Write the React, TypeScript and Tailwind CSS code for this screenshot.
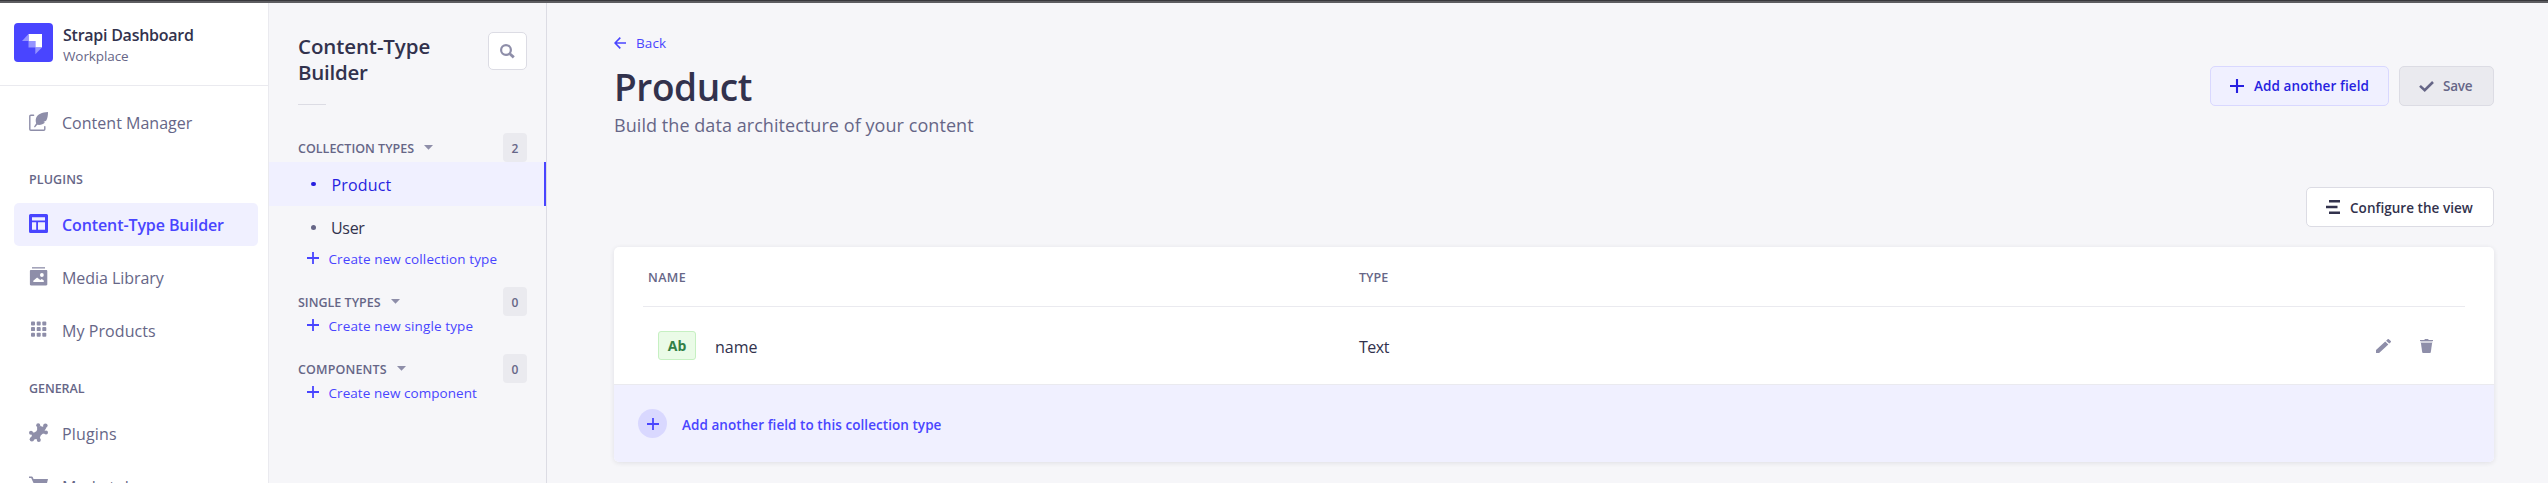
import type { ReactNode } from "react";

const FeatherIcon = () => (
  <svg width="19" height="19" viewBox="0 0 19 19" fill="none">
    <path d="M4.600 3.200H1.800a1 1 0 0 0-1 1V17.200a1 1 0 0 0 1 1H14.800a1 1 0 0 0 1-1V14.600" stroke="#8e8ea9" strokeWidth="1.400" strokeLinecap="round" />
    <path d="M19 0C13 .2 8.400 2.400 7.100 6c-.7 2-.3 4 .1 5.300L5 14.700l.9.7 2.300-2.600c2.800.4 6-.1 7.800-2.300l-1.600-.4 2.700-1.300C18.600 6.500 19 3.200 19 0Z" fill="#8e8ea9" />
  </svg>
);

const LayoutIcon = () => (
  <svg width="19" height="19" viewBox="0 0 19 19">
    <path fillRule="evenodd" fill="#4945ff" d="M1.500 0h16A1.500 1.500 0 0 1 19 1.500v16a1.500 1.500 0 0 1-1.500 1.500h-16A1.500 1.500 0 0 1 0 17.500v-16A1.500 1.500 0 0 1 1.500 0ZM3 3.200v3.300h13V3.200H3Zm0 5.100v7.400h4.200V8.300H3Zm6 0v7.400h7V8.300H9Z" />
  </svg>
);

const MediaIcon = () => (
  <svg width="19" height="19" viewBox="0 0 19 19">
    <path fill="#8e8ea9" d="M3 .2h13v1.300H3z" />
    <path fillRule="evenodd" fill="#8e8ea9" d="M2 2.900h15.200c.7 0 1.100.4 1.100 1.100v13.300c0 .7-.4 1.100-1.100 1.100H2c-.7 0-1.100-.4-1.100-1.100V4c0-.7.4-1.100 1.100-1.100ZM12.900 6.100a1.900 1.900 0 1 0 0 3.800 1.900 1.900 0 0 0 0-3.800ZM4.300 14.900h10.500v-1.400l-2-1.400-1.500 1-3.200-2.500-3.800 3.200v1.100Z" />
  </svg>
);

const GridIcon = () => (
  <svg width="19" height="19" viewBox="0 0 19 19" fill="#8e8ea9">
    {[2, 7.700, 13.300].map((x) =>
      [1.500, 7.100, 12.700].map((y) => <rect key={`${x}-${y}`} x={x} y={y} width="4" height="4" rx=".9" />)
    )}
  </svg>
);

const PuzzleIcon = () => (
  <svg width="19" height="19" viewBox="0 0 19 19" fill="#8e8ea9">
    <path d="M8 4.200l3.500-1.200 2 .7 2.500-1.200 1.200 2.500-1.500 2.500 1 3-3 .3-2 1.700-.8 2.200.4 2.200-2.300.6-1.800-1.500-3 .8L2 14.800l.9-2.300L2 9.300l3.200.2 2.200-1.200.8-1.800z" />
    <circle cx="9.200" cy="2.200" r="2" />
    <circle cx="16.400" cy="2.600" r="2.200" />
    <circle cx="17" cy="9.600" r="2" />
    <circle cx="2" cy="9.700" r="2" />
    <circle cx="2.900" cy="16.300" r="2.200" />
    <circle cx="9.800" cy="16.900" r="2" />
  </svg>
);

const CartIcon = () => (
  <svg width="19" height="19" viewBox="0 0 19 19" fill="#8e8ea9">
    <path d="M0 .4h2.800c.4 0 .7.2.9.600L4.500 3H19l-2 8.200c-.1.500-.5.800-1 .8H6.800L2.200 1.900H0V.4Z" />
    <circle cx="7.500" cy="16" r="1.800" />
    <circle cx="15" cy="16" r="1.800" />
  </svg>
);

const Plus = ({ size, color }: { size: number; color: string }) => (
  <svg width={size} height={size} viewBox="0 0 12 12" className="shrink-0">
    <path d="M5.100 0h1.800v5.100H12v1.800H6.900V12H5.100V6.900H0V5.100h5.100z" fill={color} />
  </svg>
);

function NavItem({ icon, label, active, spacing }: { icon: ReactNode; label: string; active?: boolean; spacing: string }) {
  return (
    <div className={`mx-[10px] ml-[14px] flex h-[43px] shrink-0 items-center rounded-[5px] pl-[15px] text-base ${active ? "bg-[#f0f0ff] font-semibold text-[#4945ff]" : "text-[#666687]"}`}>
      <span className="mb-[3px] w-[33px] shrink-0">{icon}</span>
      <span className={`whitespace-nowrap ${spacing}`}>{label}</span>
    </div>
  );
}

function Section({ title, count, action, spacing, actionSpacing, className, children }: { title: string; count: number; action: string; spacing: string; actionSpacing: string; className: string; children?: ReactNode }) {
  return (
    <section className={className}>
      <div className="flex h-[29px] items-center pl-[29px] pr-[19px] text-[12.5px] font-semibold text-[#666687]">
        <span className={`pt-[4px] ${spacing}`}>{title}</span>
        <svg width="9" height="5" viewBox="0 0 9 5" className="ml-[10px]">
          <path d="M0 0h9L4.500 4.800z" fill="#8e8ea9" />
        </svg>
        <span className="ml-auto flex h-full w-[24px] items-center justify-center rounded-[4px] bg-[#eaeaef] pt-[2px] text-[12px]">{count}</span>
      </div>
      {children}
      <div className="mt-px flex h-[18px] items-center pl-[38px] text-[13.5px] text-[#4945ff]">
        <span className="mb-[2px]"><Plus size={12} color="#4945ff" /></span>
        <span className={`ml-[9.500px] ${actionSpacing}`}>{action}</span>
      </div>
    </section>
  );
}

export default function App() {
  return (
    <div className="flex h-[483px] w-full flex-col overflow-hidden bg-[#f6f6f9] font-['Open_Sans','Noto_Sans',sans-serif] text-[#32324d]">
      <div className="h-[3px] shrink-0 border-t border-[#38383c] bg-[#5d5d61]" />
      <div className="flex min-h-0 flex-1">
        <nav className="flex w-[269px] shrink-0 flex-col overflow-hidden border-r border-[#eaeaef] bg-white">
          <div className="flex h-[83px] shrink-0 border-b border-[#eaeaef] pl-[14px] pt-[20px]">
            <svg width="39" height="39" viewBox="0 0 39 39">
              <rect width="39" height="39" rx="4" fill="#4945ff" />
              <path d="M14.500 11H28v13.500h-6.700V18h-6.800z" fill="#fff" />
              <path d="M14.500 11v7H8z" fill="#9593ff" />
              <path d="M14.500 18h6.800v6.500h-6.800z" fill="#9593ff" />
              <path d="M21.300 24.500H28l-6.700 6.700z" fill="#9593ff" />
            </svg>
            <div className="ml-[10px] whitespace-nowrap">
              <div className="mt-px text-base leading-[22px] font-semibold tracking-[-0.25px]">Strapi Dashboard</div>
              <div className="text-[13.5px] leading-[20px] tracking-[-0.1px] text-[#666687]">Workplace</div>
            </div>
          </div>
          <div className="flex flex-col pt-[15px]">
            <NavItem icon={<FeatherIcon />} label="Content Manager" spacing="tracking-[0.02px]" />
            <div className="mt-[27px] mb-[14px] h-[18px] pl-[29px] text-[12.5px] leading-[18px] font-semibold tracking-[0.1px] text-[#666687]">PLUGINS</div>
            <div className="flex flex-col gap-[10px]">
              <NavItem icon={<LayoutIcon />} label="Content-Type Builder" active spacing="tracking-[-0.1px]" />
              <NavItem icon={<MediaIcon />} label="Media Library" spacing="tracking-[-0.05px]" />
              <NavItem icon={<GridIcon />} label="My Products" spacing="tracking-[0.07px]" />
            </div>
            <div className="mt-[28px] mb-[14px] h-[18px] pl-[29px] text-[12.5px] leading-[18px] font-semibold tracking-[-0.05px] text-[#666687]">GENERAL</div>
            <div className="flex flex-col gap-[10px]">
              <NavItem icon={<PuzzleIcon />} label="Plugins" spacing="tracking-[0.16px]" />
              <NavItem icon={<CartIcon />} label="Marketplace" spacing="tracking-[0px]" />
            </div>
          </div>
        </nav>

        <aside className="w-[278px] shrink-0 border-r border-[#dcdce4]">
          <div className="flex justify-between pt-[29px] pr-[19px] pl-[29px]">
            <h2 className="mt-px w-[150px] text-[20.5px] leading-[26px] font-semibold tracking-[-0.1px]">Content-Type <span className="tracking-[-0.25px]">Builder</span></h2>
            <button className="flex h-[38px] w-[39px] items-center justify-center rounded-[5px] border border-[#dcdce4] bg-white">
              <svg width="15" height="15" viewBox="0 0 15 15" fill="none" stroke="#8e8ea9">
                <circle cx="6" cy="6" r="4.900" strokeWidth="2.200" />
                <path d="M9.800 9.800l4 3.600" strokeWidth="2.800" />
              </svg>
            </button>
          </div>
          <div className="mt-[19px] ml-[29px] h-px w-[28px] bg-[#dcdce4]" />
          <Section className="mt-[28px]" title="COLLECTION TYPES" count={2} action="Create new collection type" spacing="tracking-[0.01px]" actionSpacing="tracking-[0.11px]">
            <div className="flex h-[44px] items-center border-r-2 border-[#4945ff] bg-[#f0f0ff] pl-[42px] text-base font-medium text-[#271fe0]">
              <span className="mb-px h-[4px] w-[5px] rounded-full bg-[#271fe0]" />
              <span className="ml-[15.500px] pt-px tracking-[0.16px]">Product</span>
            </div>
            <div className="flex h-[43px] items-center pl-[42px] text-base">
              <span className="h-[5px] w-[5px] rounded-full bg-[#666687]" />
              <span className="ml-[15px] tracking-[-0.3px]">User</span>
            </div>
          </Section>
          <Section className="mt-[19px]" title="SINGLE TYPES" count={0} action="Create new single type" spacing="tracking-[0px]" actionSpacing="tracking-[0.11px]" />
          <Section className="mt-[19px]" title="COMPONENTS" count={0} action="Create new component" spacing="tracking-[0.14px]" actionSpacing="tracking-[0.06px]" />
        </aside>

        <main className="flex min-w-0 flex-1 flex-col pr-[54px] pl-[67px]">
          <div className="mt-[30px] flex h-[20px] items-center text-[13.5px] text-[#4945ff]">
            <svg width="12" height="12" viewBox="0 0 12 12" fill="none" stroke="#4945ff" strokeWidth="1.600">
              <path d="M12 6H1.200M6.300.6L1 6l5.300 5.400" />
            </svg>
            <span className="ml-[10px] tracking-[0.1px]">Back</span>
          </div>
          <div className="flex justify-between">
            <div>
              <h1 className="mt-[9px] text-[37px] leading-[50px] font-semibold tracking-[-0.4px]">Product</h1>
              <p className="-mt-px text-[18px] leading-[28px] tracking-[0.06px] text-[#666687]">Build the data architecture of your content</p>
            </div>
            <div className="mt-[13px] flex gap-[10px] text-[13.5px] font-semibold">
              <button className="flex h-[40px] w-[179px] items-center rounded-[5px] border border-[#d9d8ff] bg-[#f0f0ff] pl-[19px] text-[#271fe0]">
                <Plus size={14} color="#271fe0" />
                <span className="ml-[10px] tracking-[0.09px]">Add another field</span>
              </button>
              <button className="flex h-[40px] w-[95px] items-center rounded-[5px] border border-[#dcdce4] bg-[#eaeaef] pl-[19px] text-[#666687]">
                <svg width="15" height="11" viewBox="0 0 15 11" fill="none" stroke="#666687" strokeWidth="2.600">
                  <path d="M1 4.900l4.700 4.300L14 1" />
                </svg>
                <span className="ml-[9px] tracking-[-0.2px]">Save</span>
              </button>
            </div>
          </div>
          <button className="mt-[48px] flex h-[40px] w-[188px] shrink-0 items-center self-end rounded-[5px] border border-[#dcdce4] bg-white pl-[19px] text-[13.5px] font-semibold">
            <svg width="14" height="14" viewBox="0 0 14 14" fill="#32324d">
              <path d="M3 0h11v2.600H3zM0 5.700h11.500v2.600H0zM3 11.400h11V14H3z" />
            </svg>
            <span className="ml-[10px] pt-[2px] tracking-[0.04px]">Configure the view</span>
          </button>

          <div className="mt-[20px] h-[215px] shrink-0 overflow-hidden rounded-[5px] bg-white shadow-[0_1px_5px_rgba(33,33,52,0.1)]">
            <div className="mx-[29px] flex h-[60px] items-center border-b border-[#eaeaef] text-[12.5px] font-semibold text-[#666687]">
              <div className="w-[716px] pt-[4px] pl-[5px] tracking-[0.4px]">NAME</div>
              <div className="pt-[4px] tracking-[0.05px]">TYPE</div>
            </div>
            <div className="flex h-[77px] items-center pr-[61px] pl-[44px] text-base">
              <span className="flex h-[29px] w-[38px] items-center justify-center rounded-[3px] border border-[#c6f0c2] bg-[#eafbe7] pb-px text-[14px] font-bold text-[#328048]">Ab</span>
              <span className="w-[643px] pt-[2px] pl-[19px] font-medium">name</span>
              <span className="ml-[20px] pt-[2px] tracking-[-0.5px]">Text</span>
              <svg width="15" height="14" viewBox="3 3 18 18" preserveAspectRatio="none" className="ml-auto" fill="#8e8ea9">
                <path d="M3 17.250V21h3.750L17.810 9.940l-3.750-3.750L3 17.250zM20.710 7.040a1 1 0 0 0 0-1.410l-2.340-2.340a1 1 0 0 0-1.410 0l-1.830 1.830 3.750 3.750 1.830-1.830z" />
              </svg>
              <svg width="13" height="14" viewBox="0 0 13 14" className="ml-[29px]" fill="#8e8ea9">
                <path d="M0 1.100h4.200L5 0h3l.8 1.100H13V2.100H0z" />
                <path opacity=".4" d="M.4 2.100h12.200L12.400 4H.6z" />
                <path d="M.9 4h11.200l-1.300 9.200c-.1.500-.4.800-.9.800H3.100c-.5 0-.8-.3-.9-.8z" />
              </svg>
            </div>
            <div className="flex h-[78px] items-center border-t border-[#eaeaef] bg-[#f0f0ff] pl-[24px] text-[13.5px] font-semibold text-[#4945ff]">
              <span className="flex h-[29px] w-[29px] items-center justify-center rounded-full bg-[#d9d8ff]">
                <Plus size={12} color="#4945ff" />
              </span>
              <span className="ml-[15px] pt-[3px] tracking-[0.06px]">Add another field to this collection type</span>
            </div>
          </div>
        </main>
      </div>
    </div>
  );
}
